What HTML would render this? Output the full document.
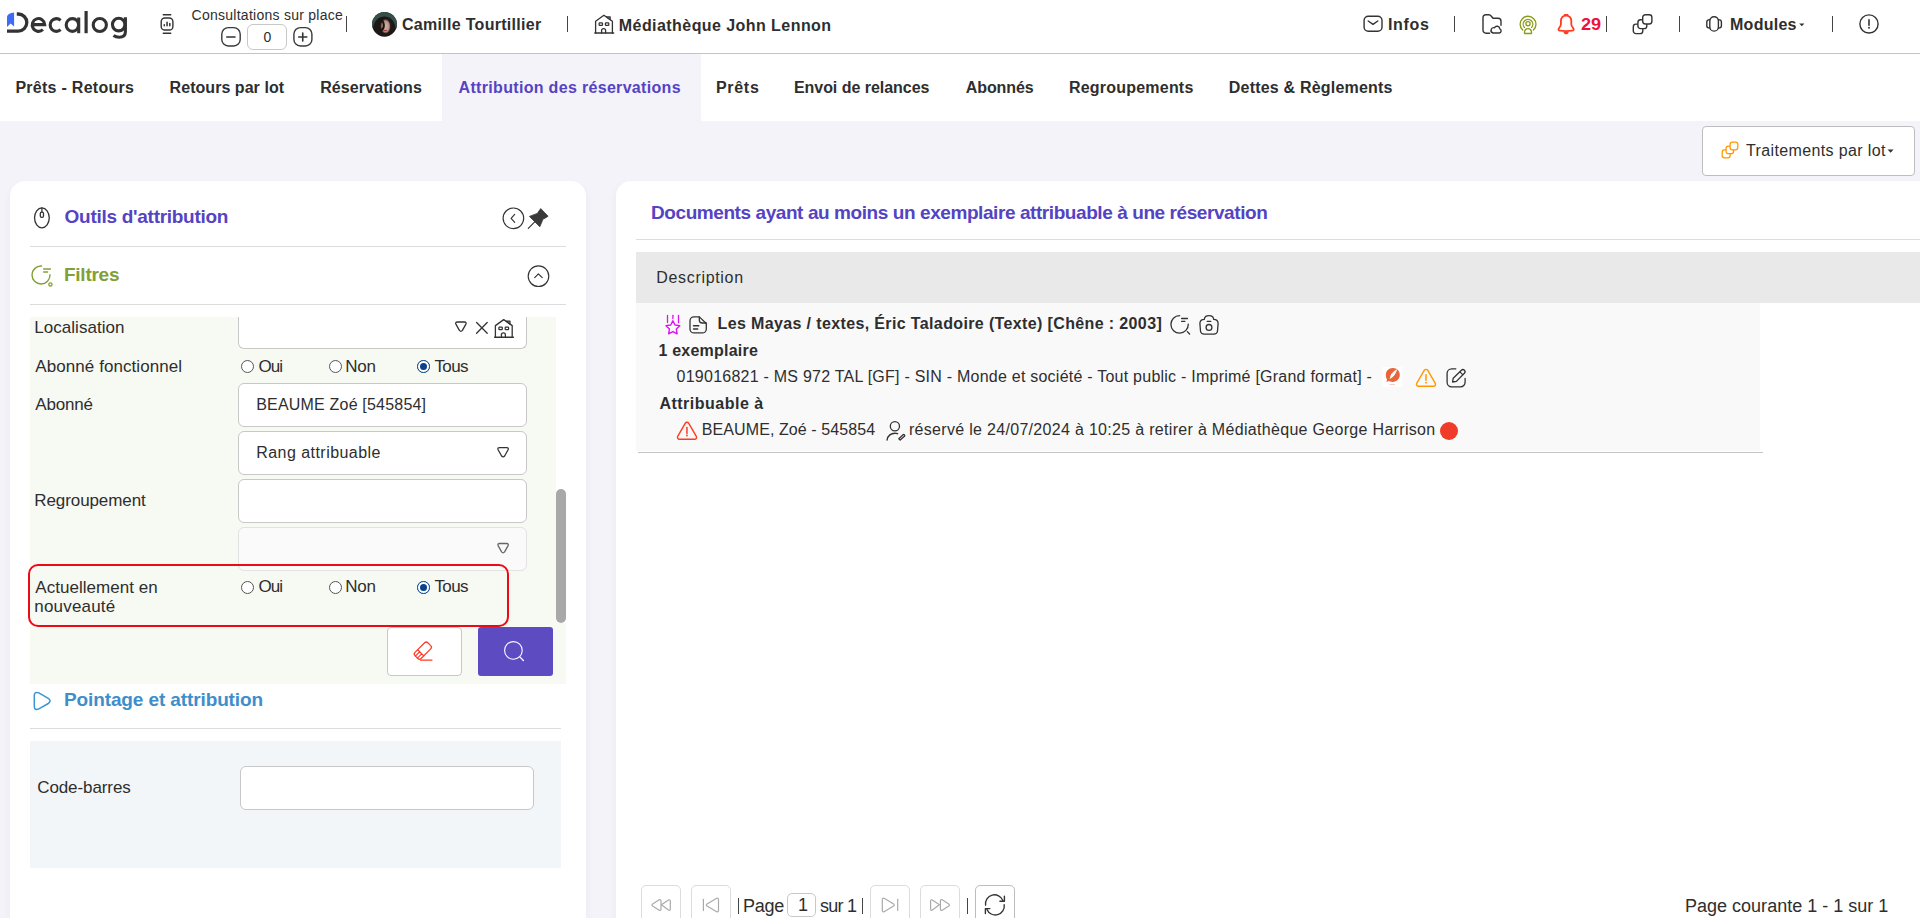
<!DOCTYPE html>
<html><head><meta charset="utf-8"><style>
html,body{margin:0;padding:0;}
body{width:1920px;height:918px;overflow:hidden;position:relative;background:#f4f3f9;font-family:"Liberation Sans", sans-serif;}
.t{position:absolute;white-space:nowrap;}
.b{position:absolute;box-sizing:border-box;}
</style></head><body>
<div class="b" style="left:0px;top:0px;width:1920px;height:53px;background:#fff"></div>
<div class="b" style="left:0px;top:53px;width:1920px;height:1px;background:#c4c4c4"></div>
<div class="b" style="left:0px;top:54px;width:1920px;height:67px;background:#fff"></div>
<div class="b" style="left:442px;top:54px;width:259px;height:67px;background:#f4f3f9"></div>
<svg class="b" style="left:0px;top:0px;" width="140" height="45" viewBox="0 0 140 45" fill="none"><path d="M7 17.5 C7 14.5 10 12.6 14.1 12.4 V26.6 L10.6 23.6 L7 27 Z" fill="#3f6cf5"/>
<path d="M16.8 14 H18.2 A8.6 8.6 0 0 1 18.2 31.2 H7" stroke="#333" stroke-width="3.3"/>
<path d="M32.2 24.6 H44.7 A6.25 6.4 0 1 0 42.9 29.5" stroke="#333" stroke-width="3.1"/>
<path d="M60.6 20.3 A6.2 6.4 0 1 0 60.6 29.7" stroke="#333" stroke-width="3.1"/>
<ellipse cx="72.4" cy="25" rx="6.2" ry="6.4" stroke="#333" stroke-width="3.1"/>
<path d="M78.7 17.5 V33.2" stroke="#333" stroke-width="3.1"/>
<path d="M86.1 11 V33.2" stroke="#333" stroke-width="3.2"/>
<ellipse cx="99.8" cy="25" rx="6.6" ry="6.5" stroke="#333" stroke-width="3.1"/>
<ellipse cx="118.7" cy="24.6" rx="6.25" ry="6.3" stroke="#333" stroke-width="3.1"/>
<path d="M125.4 17.3 V31.8 C125.4 35.9 122.8 37.3 119.2 37.3 C116.9 37.3 115 36.7 113.5 35.6" stroke="#333" stroke-width="3.1"/></svg>
<div class="t" style="left:191.60px;top:8.10px;font-size:14px;line-height:14px;font-weight:400;color:#2e2e2e;letter-spacing:0.257px;">Consultations sur place</div>
<div class="b" style="left:247px;top:24px;width:40px;height:26px;background:#fff;border:1px solid #c8c8c8;border-radius:6px"></div>
<div class="t" style="left:263.60px;top:30.15px;font-size:14px;line-height:14px;font-weight:400;color:#2e2e2e;letter-spacing:0.000px;">0</div>
<div class="t" style="left:402.00px;top:17.40px;font-size:16px;line-height:16px;font-weight:700;color:#2e2e2e;letter-spacing:0.293px;">Camille Tourtillier</div>
<div class="t" style="left:618.80px;top:18.00px;font-size:16px;line-height:16px;font-weight:700;color:#2e2e2e;letter-spacing:0.437px;">Médiathèque John Lennon</div>
<div class="t" style="left:1388.00px;top:17.20px;font-size:16px;line-height:16px;font-weight:700;color:#2e2e2e;letter-spacing:0.670px;">Infos</div>
<div class="t" style="left:1580.50px;top:17.20px;font-size:16px;line-height:16px;font-weight:700;color:#f0103c;letter-spacing:0.000px;transform:scaleX(1.1342);transform-origin:0.00px 0;">29</div>
<div class="t" style="left:1730.00px;top:17.20px;font-size:16px;line-height:16px;font-weight:700;color:#2e2e2e;letter-spacing:0.268px;">Modules</div>
<div class="b" style="left:346px;top:16px;width:1px;height:16px;background:#444"></div>
<div class="b" style="left:567px;top:16px;width:1px;height:16px;background:#444"></div>
<div class="b" style="left:1454px;top:16px;width:1px;height:16px;background:#444"></div>
<div class="b" style="left:1606px;top:16px;width:1px;height:16px;background:#444"></div>
<div class="b" style="left:1679px;top:16px;width:1px;height:16px;background:#444"></div>
<div class="b" style="left:1832px;top:16px;width:1px;height:16px;background:#444"></div>
<div class="t" style="left:15.40px;top:80.00px;font-size:16px;line-height:16px;font-weight:700;color:#2e2e2e;letter-spacing:0.272px;">Prêts - Retours</div>
<div class="t" style="left:169.60px;top:80.00px;font-size:16px;line-height:16px;font-weight:700;color:#2e2e2e;letter-spacing:0.046px;">Retours par lot</div>
<div class="t" style="left:320.20px;top:80.00px;font-size:16px;line-height:16px;font-weight:700;color:#2e2e2e;letter-spacing:0.101px;">Réservations</div>
<div class="t" style="left:458.60px;top:80.00px;font-size:16px;line-height:16px;font-weight:700;color:#5443c3;letter-spacing:0.319px;">Attribution des réservations</div>
<div class="t" style="left:715.90px;top:80.00px;font-size:16px;line-height:16px;font-weight:700;color:#2e2e2e;letter-spacing:0.719px;">Prêts</div>
<div class="t" style="left:793.90px;top:80.00px;font-size:16px;line-height:16px;font-weight:700;color:#2e2e2e;letter-spacing:-0.035px;">Envoi de relances</div>
<div class="t" style="left:965.80px;top:80.00px;font-size:16px;line-height:16px;font-weight:700;color:#2e2e2e;letter-spacing:-0.108px;">Abonnés</div>
<div class="t" style="left:1069.00px;top:80.00px;font-size:16px;line-height:16px;font-weight:700;color:#2e2e2e;letter-spacing:0.208px;">Regroupements</div>
<div class="t" style="left:1228.80px;top:80.00px;font-size:16px;line-height:16px;font-weight:700;color:#2e2e2e;letter-spacing:0.203px;">Dettes &amp; Règlements</div>
<div class="b" style="left:1702px;top:126px;width:213px;height:50px;background:#fff;border:1px solid #bdbdbd;border-radius:4px"></div>
<div class="t" style="left:1746.00px;top:142.70px;font-size:16px;line-height:16px;font-weight:400;color:#2e2e2e;letter-spacing:0.370px;">Traitements par lot</div>
<div class="b" style="left:10px;top:181px;width:576px;height:779px;background:#fff;border-radius:15px;box-shadow:0 4px 8px rgba(60,50,120,0.05)"></div>
<div class="t" style="left:64.60px;top:206.75px;font-size:19px;line-height:19px;font-weight:700;color:#5443c3;letter-spacing:-0.282px;">Outils d'attribution</div>
<div class="b" style="left:30px;top:246px;width:536px;height:1px;background:#ddd"></div>
<div class="t" style="left:64.00px;top:264.85px;font-size:19px;line-height:19px;font-weight:700;color:#82a034;letter-spacing:-0.259px;">Filtres</div>
<div class="b" style="left:30px;top:304px;width:536px;height:1px;background:#ddd"></div>
<div class="b" style="left:30px;top:317px;width:526px;height:306px;background:#f7f9f3"></div>
<div class="b" style="left:30px;top:623px;width:536px;height:61px;background:#f7f9f3"></div>
<div class="b" style="left:238px;top:317px;width:289px;height:32px;background:#fff;border:1px solid #c8c8c8;border-top:none;border-radius:0 0 6px 6px"></div>
<div class="b" style="left:238px;top:383px;width:289px;height:44px;background:#fff;border:1px solid #c8c8c8;border-radius:6px"></div>
<div class="b" style="left:238px;top:431px;width:289px;height:44px;background:#fff;border:1px solid #c8c8c8;border-radius:6px"></div>
<div class="b" style="left:238px;top:479px;width:289px;height:44px;background:#fff;border:1px solid #c8c8c8;border-radius:6px"></div>
<div class="b" style="left:238px;top:527px;width:289px;height:44px;background:#fafafa;border:1px solid #e2e2e2;border-radius:6px"></div>
<div class="t" style="left:34.30px;top:318.95px;font-size:17px;line-height:17px;font-weight:400;color:#2e2e2e;letter-spacing:0.034px;">Localisation</div>
<div class="t" style="left:35.30px;top:358.05px;font-size:17px;line-height:17px;font-weight:400;color:#2e2e2e;letter-spacing:0.071px;">Abonné fonctionnel</div>
<div class="t" style="left:35.30px;top:395.55px;font-size:17px;line-height:17px;font-weight:400;color:#2e2e2e;letter-spacing:-0.191px;">Abonné</div>
<div class="t" style="left:256.20px;top:396.70px;font-size:16px;line-height:16px;font-weight:400;color:#2e2e2e;letter-spacing:0.196px;">BEAUME Zoé [545854]</div>
<div class="t" style="left:256.20px;top:444.80px;font-size:16px;line-height:16px;font-weight:400;color:#2e2e2e;letter-spacing:0.459px;">Rang attribuable</div>
<div class="t" style="left:34.30px;top:492.45px;font-size:17px;line-height:17px;font-weight:400;color:#2e2e2e;letter-spacing:-0.094px;">Regroupement</div>
<div class="t" style="left:35.30px;top:578.95px;font-size:17px;line-height:17px;font-weight:400;color:#2e2e2e;letter-spacing:0.032px;">Actuellement en</div>
<div class="t" style="left:34.30px;top:597.75px;font-size:17px;line-height:17px;font-weight:400;color:#2e2e2e;letter-spacing:0.181px;">nouveauté</div>
<div class="b" style="left:240.7px;top:360.0px;width:13.0px;height:13.0px;border:1px solid #555;border-radius:50%;background:#fff"></div>
<div class="t" style="left:258.40px;top:357.55px;font-size:17px;line-height:17px;font-weight:400;color:#2e2e2e;letter-spacing:-0.939px;">Oui</div>
<div class="b" style="left:328.8px;top:360.0px;width:13.0px;height:13.0px;border:1px solid #555;border-radius:50%;background:#fff"></div>
<div class="t" style="left:345.25px;top:357.55px;font-size:17px;line-height:17px;font-weight:400;color:#2e2e2e;letter-spacing:-0.191px;">Non</div>
<div class="b" style="left:416.8px;top:360.0px;width:13.0px;height:13.0px;border:1px solid #555;border-radius:50%;background:#fff"></div>
<div class="b" style="left:416.8px;top:360.0px;width:13.0px;height:13.0px;border:1.6px solid #0d4d96;border-radius:50%;background:#fff"></div>
<div class="b" style="left:419.8px;top:363.0px;width:7.0px;height:7.0px;border-radius:50%;background:#0d3f8a"></div>
<div class="t" style="left:434.40px;top:357.55px;font-size:17px;line-height:17px;font-weight:400;color:#2e2e2e;letter-spacing:-0.570px;">Tous</div>
<div class="b" style="left:240.7px;top:581.0px;width:13.0px;height:13.0px;border:1px solid #555;border-radius:50%;background:#fff"></div>
<div class="t" style="left:258.40px;top:578.05px;font-size:17px;line-height:17px;font-weight:400;color:#2e2e2e;letter-spacing:-0.939px;">Oui</div>
<div class="b" style="left:328.8px;top:581.0px;width:13.0px;height:13.0px;border:1px solid #555;border-radius:50%;background:#fff"></div>
<div class="t" style="left:345.25px;top:578.05px;font-size:17px;line-height:17px;font-weight:400;color:#2e2e2e;letter-spacing:-0.191px;">Non</div>
<div class="b" style="left:416.8px;top:581.0px;width:13.0px;height:13.0px;border:1px solid #555;border-radius:50%;background:#fff"></div>
<div class="b" style="left:416.8px;top:581.0px;width:13.0px;height:13.0px;border:1.6px solid #0d4d96;border-radius:50%;background:#fff"></div>
<div class="b" style="left:419.8px;top:584.0px;width:7.0px;height:7.0px;border-radius:50%;background:#0d3f8a"></div>
<div class="t" style="left:434.40px;top:578.05px;font-size:17px;line-height:17px;font-weight:400;color:#2e2e2e;letter-spacing:-0.570px;">Tous</div>
<div class="b" style="left:27.5px;top:564.4px;width:481.0px;height:62.200000000000045px;border:2px solid #ee0a14;border-radius:10px"></div>
<div class="b" style="left:556px;top:489px;width:10px;height:134px;background:#a8a8a8;border-radius:5px"></div>
<div class="b" style="left:387px;top:627px;width:75px;height:49px;background:#fff;border:1px solid #c8c8c8;border-radius:4px"></div>
<div class="b" style="left:478px;top:627px;width:75px;height:49px;background:#5d4bc2;border-radius:3px"></div>
<div class="t" style="left:64.00px;top:689.75px;font-size:19px;line-height:19px;font-weight:700;color:#3d8ecb;letter-spacing:-0.114px;">Pointage et attribution</div>
<div class="b" style="left:30px;top:728px;width:531px;height:1px;background:#ddd"></div>
<div class="b" style="left:30px;top:741px;width:531px;height:127px;background:#f3f6f9"></div>
<div class="t" style="left:37.20px;top:778.95px;font-size:17px;line-height:17px;font-weight:400;color:#2e2e2e;letter-spacing:-0.089px;">Code-barres</div>
<div class="b" style="left:240px;top:766px;width:294px;height:44px;background:#fff;border:1px solid #c8c8c8;border-radius:6px"></div>
<div class="b" style="left:616px;top:181px;width:1344px;height:779px;background:#fff;border-radius:15px;box-shadow:0 4px 8px rgba(60,50,120,0.05)"></div>
<div class="t" style="left:651.00px;top:202.85px;font-size:19px;line-height:19px;font-weight:700;color:#5443c3;letter-spacing:-0.423px;">Documents ayant au moins un exemplaire attribuable à une réservation</div>
<div class="b" style="left:636px;top:239px;width:1284px;height:1px;background:#ddd"></div>
<div class="b" style="left:636px;top:252px;width:1284px;height:51px;background:#e9e9e9"></div>
<div class="t" style="left:656.20px;top:270.30px;font-size:16px;line-height:16px;font-weight:400;color:#2e2e2e;letter-spacing:0.687px;">Description</div>
<div class="b" style="left:636px;top:303px;width:1124px;height:148px;background:#f9f9f9"></div>
<div class="b" style="left:638px;top:452px;width:1125px;height:1px;background:#c4c4c4"></div>
<div class="t" style="left:717.50px;top:315.90px;font-size:16px;line-height:16px;font-weight:700;color:#2e2e2e;letter-spacing:0.369px;">Les Mayas / textes, Éric Taladoire (Texte) [Chêne : 2003]</div>
<div class="t" style="left:658.40px;top:343.20px;font-size:16px;line-height:16px;font-weight:700;color:#2e2e2e;letter-spacing:0.222px;">1 exemplaire</div>
<div class="t" style="left:676.60px;top:369.40px;font-size:16px;line-height:16px;font-weight:400;color:#2e2e2e;letter-spacing:0.237px;">019016821 - MS 972 TAL [GF] - SIN - Monde et société - Tout public - Imprimé [Grand format] -</div>
<div class="t" style="left:659.40px;top:396.10px;font-size:16px;line-height:16px;font-weight:700;color:#2e2e2e;letter-spacing:0.501px;">Attribuable à</div>
<div class="t" style="left:701.80px;top:422.40px;font-size:16px;line-height:16px;font-weight:400;color:#2e2e2e;letter-spacing:0.087px;">BEAUME, Zoé - 545854</div>
<div class="t" style="left:908.90px;top:422.40px;font-size:16px;line-height:16px;font-weight:400;color:#2e2e2e;letter-spacing:0.310px;">réservé le 24/07/2024 à 10:25 à retirer à Médiathèque George Harrison</div>
<div class="b" style="left:1440px;top:422px;width:18px;height:18px;background:#f03a2a;border-radius:50%"></div>
<div class="b" style="left:641px;top:885px;width:40px;height:45px;background:#fff;border:1px solid #dcdcdc;border-radius:5px"></div>
<div class="b" style="left:691px;top:885px;width:40px;height:45px;background:#fff;border:1px solid #dcdcdc;border-radius:5px"></div>
<div class="b" style="left:870px;top:885px;width:40px;height:45px;background:#fff;border:1px solid #dcdcdc;border-radius:5px"></div>
<div class="b" style="left:920px;top:885px;width:40px;height:45px;background:#fff;border:1px solid #dcdcdc;border-radius:5px"></div>
<div class="b" style="left:975px;top:885px;width:40px;height:45px;background:#fff;border:1px solid #bdbdbd;border-radius:5px"></div>
<div class="b" style="left:738px;top:898px;width:1px;height:16px;background:#444"></div>
<div class="b" style="left:862px;top:898px;width:1px;height:16px;background:#444"></div>
<div class="b" style="left:967px;top:898px;width:1px;height:16px;background:#444"></div>
<div class="t" style="left:743.10px;top:896.60px;font-size:18px;line-height:18px;font-weight:400;color:#2e2e2e;letter-spacing:-0.309px;">Page</div>
<div class="b" style="left:787px;top:893px;width:29px;height:24px;background:#fff;border:1px solid #c8c8c8;border-radius:5px"></div>
<div class="t" style="left:798.00px;top:895.90px;font-size:18px;line-height:18px;font-weight:400;color:#2e2e2e;letter-spacing:0.000px;">1</div>
<div class="t" style="left:820.00px;top:896.60px;font-size:18px;line-height:18px;font-weight:400;color:#2e2e2e;letter-spacing:-0.776px;">sur 1</div>
<div class="t" style="left:1685.00px;top:897.00px;font-size:18px;line-height:18px;font-weight:400;color:#2e2e2e;letter-spacing:0.008px;">Page courante 1 - 1 sur 1</div>
<svg class="b" style="left:0;top:0" width="1920" height="918" viewBox="0 0 1920 918" fill="none"><path d="M163.3 14.7 H170.7" stroke="#333" stroke-width="1.5" fill="none" stroke-linecap="round" stroke-linejoin="round" /><rect x="161.20" y="18.00" width="11.70" height="12.00" rx="3.6" stroke="#333" stroke-width="1.4" fill="none"/><path d="M164.3 24.8 V25.8 M167.05 22.3 V25.8 M169.8 23.5 V25.8" stroke="#333" stroke-width="1.5" fill="none" stroke-linecap="round" stroke-linejoin="round" /><path d="M163.3 33.2 H170.7" stroke="#333" stroke-width="1.5" fill="none" stroke-linecap="round" stroke-linejoin="round" /><rect x="221.80" y="27.60" width="18.40" height="18.40" rx="6.5" stroke="#3a3a3a" stroke-width="1.4" fill="none"/><path d="M226.8 37 H235" stroke="#333" stroke-width="1.6" fill="none" stroke-linecap="round" stroke-linejoin="round" /><rect x="293.90" y="27.60" width="18.00" height="18.40" rx="6.5" stroke="#3a3a3a" stroke-width="1.4" fill="none"/><path d="M298.7 37 H306.8 M302.75 33 V41" stroke="#333" stroke-width="1.6" fill="none" stroke-linecap="round" stroke-linejoin="round" /><defs><clipPath id="avc"><circle cx="384.5" cy="24.35" r="12.4"/></clipPath><radialGradient id="fc" cx="0.5" cy="0.5" r="0.5"><stop offset="0" stop-color="#d2b3a6"/><stop offset="0.7" stop-color="#b8968a"/><stop offset="1" stop-color="#3a2a25"/></radialGradient></defs><g clip-path="url(#avc)"><rect x="371" y="11" width="27" height="27" fill="#1d1715"/><path d="M370 26 C370 14 378 10.5 385 10.5 C392 10.5 399 14 399 25 L396 30 C395 22 392 17 385 16.5 C378 16.5 374 21 373 28 Z" fill="#34504b"/><ellipse cx="385.6" cy="26.3" rx="5" ry="7.3" fill="url(#fc)"/><path d="M378.5 19 C381 19 383.5 21 383.8 25 C384 28 382.5 30 380 31" stroke="#1d1412" stroke-width="2.2" fill="none"/><path d="M388 17.8 C389.5 20 391 22 391.3 26" stroke="#2a1d19" stroke-width="1.2" fill="none"/><path d="M383.2 30.4 Q385.2 29.6 387.4 30.4 Q385.2 31.6 383.2 30.4 Z" fill="#9d1f2e"/></g><g transform="translate(590 10)"><path d="M5.6 23 V11.3 L13.9 5.3 L22.4 11.3 V23" stroke="#333" stroke-width="1.3" fill="none" stroke-linecap="round" stroke-linejoin="round" /><path d="M4.9 23 H23.6" stroke="#333" stroke-width="1.5" fill="none" stroke-linecap="round" stroke-linejoin="round" /><path d="M16.4 6.9 H20.2 V9.9 Z" stroke="#333" stroke-width="1.2" fill="#999" stroke-linecap="round" stroke-linejoin="round" /><rect x="9.10" y="12.80" width="3.40" height="2.60" rx="0.7" stroke="#333" stroke-width="1.25" fill="none"/><rect x="15.40" y="12.80" width="3.40" height="2.60" rx="0.7" stroke="#333" stroke-width="1.25" fill="none"/><path d="M11.6 23 V20.6 A1.9 1.9 0 0 1 15.6 20.6 V23" stroke="#333" stroke-width="1.3" fill="none" stroke-linecap="round" stroke-linejoin="round" /></g><g transform="translate(489.8 314.3)"><path d="M5.6 23 V11.3 L13.9 5.3 L22.4 11.3 V23" stroke="#333" stroke-width="1.3" fill="none" stroke-linecap="round" stroke-linejoin="round" /><path d="M4.9 23 H23.6" stroke="#333" stroke-width="1.5" fill="none" stroke-linecap="round" stroke-linejoin="round" /><path d="M16.4 6.9 H20.2 V9.9 Z" stroke="#333" stroke-width="1.2" fill="#999" stroke-linecap="round" stroke-linejoin="round" /><rect x="9.10" y="12.80" width="3.40" height="2.60" rx="0.7" stroke="#333" stroke-width="1.25" fill="none"/><rect x="15.40" y="12.80" width="3.40" height="2.60" rx="0.7" stroke="#333" stroke-width="1.25" fill="none"/><path d="M11.6 23 V20.6 A1.9 1.9 0 0 1 15.6 20.6 V23" stroke="#333" stroke-width="1.3" fill="none" stroke-linecap="round" stroke-linejoin="round" /></g><rect x="1364.10" y="16.30" width="17.90" height="15.00" rx="4.2" stroke="#333" stroke-width="1.4" fill="none"/><path d="M1368.2 21 L1373 24.4 L1377.8 21" stroke="#333" stroke-width="1.4" fill="none" stroke-linecap="round" stroke-linejoin="round" /><path d="M1489.6 33.2 H1486 A3 3 0 0 1 1483 30.2 V17.5 A2.7 2.7 0 0 1 1485.7 14.8 H1489 C1490.5 14.8 1491 15.5 1492 17 L1492.8 18.2 H1498 A3 3 0 0 1 1501 21.2 V25.2" stroke="#333" stroke-width="1.4" fill="none" stroke-linecap="round" stroke-linejoin="round" /><path d="M1493 33 H1499.2 A2.2 2.2 0 0 0 1499.8 28.8 A2.8 2.8 0 0 0 1494.5 27.8 A2.2 2.2 0 0 0 1493 33 Z" stroke="#333" stroke-width="1.4" fill="none" stroke-linecap="round" stroke-linejoin="round" /><path d="M1522.7 30 A7.9 7.9 0 1 1 1533.4 30" stroke="#8c9a17" stroke-width="1.35" fill="none" stroke-linecap="round" stroke-linejoin="round" /><path d="M1524.4 27.4 A4.8 4.8 0 1 1 1531.6 27.4" stroke="#8c9a17" stroke-width="1.35" fill="none" stroke-linecap="round" stroke-linejoin="round" /><circle cx="1528" cy="23.8" r="2.1" stroke="#8c9a17" stroke-width="1.35" fill="none"/><path d="M1524.5 33.5 C1524.2 30 1526 28.6 1528 28.6 C1530 28.6 1531.8 30 1531.5 33.5 Z" stroke="#8c9a17" stroke-width="1.35" fill="none" stroke-linecap="round" stroke-linejoin="round" /><path d="M1566.1 15.6 C1562.6 15.6 1560.9 18.4 1560.9 21.6 V24.3 C1560.9 26.2 1559.9 27.2 1558.9 28.3 C1557.9 29.4 1558.6 30.5 1560.1 30.7 C1564 31.2 1568.2 31.2 1572.1 30.7 C1573.6 30.5 1574.3 29.4 1573.3 28.3 C1572.3 27.2 1571.3 26.2 1571.3 24.3 V21.6 C1571.3 18.4 1569.6 15.6 1566.1 15.6 Z" stroke="#ff3b20" stroke-width="1.8" fill="none" stroke-linecap="round" stroke-linejoin="round" /><path d="M1564.6 14.9 H1567.6" stroke="#ff3b20" stroke-width="1.8" fill="none" stroke-linecap="round" stroke-linejoin="round" /><path d="M1563.4 31.4 H1568.8 C1568.6 33.2 1567.6 34.3 1566.1 34.3 C1564.6 34.3 1563.6 33.2 1563.4 31.4 Z" fill="#ff3b20"/><g transform="translate(1632.6 14.0)"><g transform="scale(1.0)"><rect x="0.70" y="10.10" width="9.50" height="9.50" rx="2.7" stroke="#333" stroke-width="1.4" fill="#fff"/><rect x="5.30" y="5.70" width="8.90" height="8.90" rx="2.7" stroke="#333" stroke-width="1.4" fill="#fff"/><rect x="10.10" y="0.80" width="9.20" height="9.20" rx="2.7" stroke="#333" stroke-width="1.4" fill="#fff"/></g></g><rect x="1709.80" y="16.80" width="8.60" height="14.30" rx="4.2" stroke="#333" stroke-width="1.4" fill="none"/><path d="M1709.8 19.6 C1707.8 19.6 1706.8 20.3 1706.8 21.8 V26 C1706.8 27.5 1707.8 28.1 1709.8 28.1" stroke="#333" stroke-width="1.4" fill="none" stroke-linecap="round" stroke-linejoin="round" /><path d="M1718.4 19.6 C1720.4 19.6 1721.4 20.3 1721.4 21.8 V26 C1721.4 27.5 1720.4 28.1 1718.4 28.1" stroke="#333" stroke-width="1.4" fill="none" stroke-linecap="round" stroke-linejoin="round" /><path d="M1799.2 23.6 H1804.4 L1801.8 26.2 Z" fill="#333"/><circle cx="1869" cy="23.95" r="9.1" stroke="#333" stroke-width="1.4" fill="none"/><path d="M1869 19.9 V25.2" stroke="#333" stroke-width="1.6" fill="none" stroke-linecap="round" stroke-linejoin="round" /><path d="M1869 27.6 V27.7" stroke="#333" stroke-width="1.9" fill="none" stroke-linecap="round" stroke-linejoin="round" /><g transform="translate(1721.6 141.4)"><g transform="scale(0.84)"><rect x="0.70" y="10.10" width="9.50" height="9.50" rx="2.7" stroke="#ff9800" stroke-width="1.5" fill="#fff"/><rect x="5.30" y="5.70" width="8.90" height="8.90" rx="2.7" stroke="#ff9800" stroke-width="1.5" fill="#fff"/><rect x="10.10" y="0.80" width="9.20" height="9.20" rx="2.7" stroke="#ff9800" stroke-width="1.5" fill="#fff"/></g></g><path d="M1887.6 149.6 H1893.6 L1890.6 152.8 Z" fill="#333"/><ellipse cx="41.9" cy="217.85" rx="7.35" ry="10" stroke="#333" stroke-width="1.3"/><rect x="40.30" y="212.20" width="3.20" height="5.10" rx="1.3" stroke="#333" stroke-width="1.3" fill="none"/><path d="M41.9 208 V212" stroke="#333" stroke-width="1.3" fill="none" stroke-linecap="round" stroke-linejoin="round" /><circle cx="513.4" cy="218.3" r="10.3" stroke="#333" stroke-width="1.15" fill="none"/><path d="M514.7 214.4 L511.1 218.4 L514.7 222.4" stroke="#333" stroke-width="1.15" fill="none" stroke-linecap="round" stroke-linejoin="round" stroke-linecap="butt"/><path d="M540.7 208.6 L548.1 216.2 C546.5 217.5 544.5 218.4 542.9 219.3 C541.9 221.8 541 224.3 539.8 226.8 L529.4 216.4 C532 215.3 534.6 214.4 537.3 213.4 C538.4 211.8 539.6 210.2 540.7 208.6 Z" fill="#3a3a3a" stroke="#3a3a3a" stroke-width="0.8" stroke-linejoin="round"/><path d="M535.2 221.4 L528.3 228.4" stroke="#3a3a3a" stroke-width="1.2" fill="none" stroke-linecap="round" stroke-linejoin="round" /><path d="M41.5 266 A9 9 0 1 0 50 274.6" stroke="#82a034" stroke-width="1.4" fill="none" stroke-linecap="round" stroke-linejoin="round" /><path d="M43.7 269 H50.4 M43.7 272 H47.6" stroke="#82a034" stroke-width="1.4" fill="none" stroke-linecap="round" stroke-linejoin="round" /><circle cx="50.4" cy="284.4" r="1.6" stroke="#82a034" stroke-width="1.3" fill="none"/><circle cx="538.5" cy="276.2" r="10.3" stroke="#333" stroke-width="1.15" fill="none"/><path d="M534.7 277.6 L538.4 273.8 L542.2 277.6" stroke="#333" stroke-width="1.15" fill="none" stroke-linecap="round" stroke-linejoin="round" stroke-linecap="butt"/><path d="M457.4 322.0 H464.4 Q466.79999999999995 322.0 465.9 324.1 L462.4 330.4 Q460.9 332.2 459.4 330.4 L455.9 324.1 Q455.0 322.0 457.4 322.0 Z" stroke="#333" stroke-width="1.3" fill="none" stroke-linecap="round" stroke-linejoin="round" /><path d="M499.6 447.6 H506.6 Q509.0 447.6 508.1 449.70000000000005 L504.6 456.0 Q503.1 457.8 501.6 456.0 L498.1 449.70000000000005 Q497.20000000000005 447.6 499.6 447.6 Z" stroke="#333" stroke-width="1.3" fill="none" stroke-linecap="round" stroke-linejoin="round" /><path d="M499.6 543.5 H506.6 Q509.0 543.5 508.1 545.6 L504.6 551.9 Q503.1 553.7 501.6 551.9 L498.1 545.6 Q497.20000000000005 543.5 499.6 543.5 Z" stroke="#666" stroke-width="1.3" fill="none" stroke-linecap="round" stroke-linejoin="round" /><path d="M476.6 322.5 L487.2 333.2 M487.2 322.5 L476.6 333.2" stroke="#333" stroke-width="1.3" fill="none" stroke-linecap="round" stroke-linejoin="round" /><g transform="translate(422.85 650.65) rotate(-45)"><rect x="-9.10" y="-4.30" width="18.20" height="8.60" rx="2.3" stroke="#ff3b26" stroke-width="1.25" fill="none"/><path d="M-3.0 -4.3 V4.3 M-9.1 -1.45 H-3.0 M-9.1 1.45 H-3.0" stroke="#ff3b26" stroke-width="1.15" fill="none" stroke-linecap="round" stroke-linejoin="round" /></g><path d="M420.5 660.2 H431.9" stroke="#ff3b26" stroke-width="1.25" fill="none" stroke-linecap="round" stroke-linejoin="round" /><circle cx="513.4" cy="650.4" r="8.8" stroke="#fff" stroke-width="1.1" fill="none"/><path d="M519.8 656.9 L523.4 660.5" stroke="#fff" stroke-width="1.3" fill="none" stroke-linecap="round" stroke-linejoin="round" /><path d="M34.3 695.5 C34.3 692.5 36.5 691.8 38.8 692.9 L48.3 698.3 C50.7 699.7 50.7 702 48.3 703.5 L38.8 708.9 C36.5 710.1 34.3 709.4 34.3 706.4 Z" stroke="#3a95d0" stroke-width="1.5" fill="none" stroke-linecap="round" stroke-linejoin="round" /><g transform="translate(664.6 319.3) scale(0.69)"><path d="M12 17.75l-6.172 3.245l1.179 -6.873l-5 -4.867l6.9 -1l3.086 -6.253l3.086 6.253l6.9 1l-5 4.867l1.179 6.873z" stroke="#dd12f2" stroke-width="2.0" fill="none" stroke-linecap="round" stroke-linejoin="round" /></g><path d="M667.5 315.3 V322.5 M678.5 315.3 V322.5" stroke="#dd12f2" stroke-width="1.3" fill="none" stroke-linecap="round" stroke-linejoin="round" /><path d="M672.9 315.3 V318.6" stroke="#dd12f2" stroke-width="1.3" fill="none" stroke-linecap="round" stroke-linejoin="round" /><path d="M699.3 316.9 H694 A4 4 0 0 0 690 320.9 V328.9 A4 4 0 0 0 694 332.9 H702.3 A4 4 0 0 0 706.3 328.9 V323.5 Z" stroke="#333" stroke-width="1.3" fill="none" stroke-linecap="round" stroke-linejoin="round" /><path d="M699.3 317 V320 A3 3 0 0 0 702.3 323 H706.2" stroke="#333" stroke-width="1.3" fill="none" stroke-linecap="round" stroke-linejoin="round" /><path d="M693.5 325.7 H698.8 M693.5 329 H697.7" stroke="#333" stroke-width="1.4" fill="none" stroke-linecap="round" stroke-linejoin="round" /><path d="M1179.6 315.7 A8.7 8.7 0 1 0 1188.3 324.1" stroke="#333" stroke-width="1.3" fill="none" stroke-linecap="round" stroke-linejoin="round" /><path d="M1181.6 318.5 H1187.5 M1181.6 321.3 H1184.9" stroke="#333" stroke-width="1.3" fill="none" stroke-linecap="round" stroke-linejoin="round" /><path d="M1187.3 331.6 L1189.6 334" stroke="#333" stroke-width="1.3" fill="none" stroke-linecap="round" stroke-linejoin="round" /><path d="M1204.3 319.4 C1204.5 317 1206.4 315.7 1209 315.7 C1211.6 315.7 1213.5 317 1213.7 319.4 C1216.5 319.5 1218.1 320.6 1218.1 323.6 L1217.5 331 C1217.3 333.2 1216.1 334.1 1213.5 334.1 H1204.5 C1201.9 334.1 1200.7 333.2 1200.5 331 L1199.9 323.6 C1199.9 320.6 1201.5 319.5 1204.3 319.4 Z" stroke="#333" stroke-width="1.3" fill="none" stroke-linecap="round" stroke-linejoin="round" /><circle cx="1209" cy="327.4" r="2.9" stroke="#333" stroke-width="1.3" fill="none"/><path d="M1207.2 321.3 H1210.8" stroke="#333" stroke-width="1.3" fill="none" stroke-linecap="round" stroke-linejoin="round" /><rect x="1382.2" y="366.9" width="19.8" height="19.9" fill="#fff"/><path d="M1392.8 368.1 C1397 368.1 1399.8 371 1399.8 374.8 C1399.8 378.8 1396.8 381.9 1392.6 381.9 C1391 381.9 1389.8 381.6 1388.8 381.1 L1386.5 382 L1387 379.6 C1386.2 378.3 1385.8 376.8 1385.8 375.2 C1385.8 371.2 1388.6 368.1 1392.8 368.1 Z" fill="#e9643a"/><path d="M1389.6 379.2 Q1390.2 372.8 1397.2 368.9 Q1395.8 375.6 1389.6 379.2 Z" fill="#fff"/><rect x="1389.5" y="384" width="5.5" height="0.8" fill="#f0c4b4"/><path d="M1424.2 370.4 C1425 369 1427 369 1427.8 370.4 L1435.3 383.3 C1436 384.7 1435.1 386.3 1433.5 386.3 H1418.5 C1416.9 386.3 1416 384.7 1416.7 383.3 Z" stroke="#ff9800" stroke-width="1.4" fill="none" stroke-linecap="round" stroke-linejoin="round" /><path d="M1426 374.8 V380.3" stroke="#ff9800" stroke-width="1.5" fill="none" stroke-linecap="round" stroke-linejoin="round" /><path d="M1426 382.6 V382.7" stroke="#ff9800" stroke-width="1.8" fill="none" stroke-linecap="round" stroke-linejoin="round" /><path d="M1455.8 368.8 H1451.6 A4.5 4.5 0 0 0 1447.1 373.3 V382.3 A4.5 4.5 0 0 0 1451.6 386.8 H1460.6 A4.5 4.5 0 0 0 1465.1 382.3 V378.5" stroke="#333" stroke-width="1.3" fill="none" stroke-linecap="round" stroke-linejoin="round" /><path d="M1461.4 370.2 A1.9 1.9 0 0 1 1464.4 373.2 L1456.4 381.4 L1452.6 382 L1453.2 378.2 Z" stroke="#333" stroke-width="1.3" fill="none" stroke-linecap="round" stroke-linejoin="round" /><path d="M1460 371.9 L1462.7 374.6" stroke="#333" stroke-width="1.2" fill="none" stroke-linecap="round" stroke-linejoin="round" /><path d="M685.2 423.3 C686 421.9 688 421.9 688.8 423.3 L696.3 436.3 C697 437.7 696.1 439.3 694.5 439.3 H679.5 C677.9 439.3 677 437.7 677.7 436.3 Z" stroke="#ff3b20" stroke-width="1.4" fill="none" stroke-linecap="round" stroke-linejoin="round" /><path d="M686.95 427.6 V433.4" stroke="#ff3b20" stroke-width="1.5" fill="none" stroke-linecap="round" stroke-linejoin="round" /><path d="M686.95 435.5 V435.6" stroke="#ff3b20" stroke-width="1.8" fill="none" stroke-linecap="round" stroke-linejoin="round" /><circle cx="894.9" cy="426.3" r="4.6" stroke="#333" stroke-width="1.3" fill="none"/><path d="M887.1 440 C887.6 435.8 891.2 432.9 895.5 433.2 C896.3 433.2 897 433.4 897.6 433.7" stroke="#333" stroke-width="1.4" fill="none" stroke-linecap="round" stroke-linejoin="round" /><path d="M898.8 438.7 L903.3 434.6 A1.1 1.1 0 0 1 904.7 436 L900.2 440.1 Z" stroke="#333" stroke-width="1.3" fill="none" stroke-linecap="round" stroke-linejoin="round" /><path d="M652.6 903.9 L659.2 899.8 C660.2 899.2 661 899.8 661 900.9 V909.1 C661 910.2 660.2 910.8 659.2 910.2 L652.6 906.1 C651.8 905.6 651.8 904.4 652.6 903.9 Z" stroke="#aaa" stroke-width="1.2" fill="none" stroke-linecap="round" stroke-linejoin="round" /><path d="M661.4 904.8 L668.5 900 C669.5 899.4 670.3 900 670.3 901.1 V909 C670.3 910.1 669.5 910.7 668.5 910.1 Z" stroke="#aaa" stroke-width="1.2" fill="none" stroke-linecap="round" stroke-linejoin="round" /><path d="M703.4 899.3 V910.5" stroke="#aaa" stroke-width="1.2" fill="none" stroke-linecap="round" stroke-linejoin="round" /><path d="M707 903.9 L716.2 898.4 C717.4 897.7 718.5 898.4 718.5 899.7 V910.3 C718.5 911.6 717.4 912.3 716.2 911.6 L707 906.1 C706.2 905.6 706.2 904.4 707 903.9 Z" stroke="#aaa" stroke-width="1.2" fill="none" stroke-linecap="round" stroke-linejoin="round" /><path d="M893.6 903.9 L884.6 898.4 C883.4 897.7 882.3 898.4 882.3 899.7 V910.3 C882.3 911.6 883.4 912.3 884.6 911.6 L893.6 906.1 C894.4 905.6 894.4 904.4 893.6 903.9 Z" stroke="#aaa" stroke-width="1.2" fill="none" stroke-linecap="round" stroke-linejoin="round" /><path d="M897.7 899.3 V910.5" stroke="#aaa" stroke-width="1.2" fill="none" stroke-linecap="round" stroke-linejoin="round" /><path d="M939.4 904.8 L932.3 900 C931.3 899.4 930.6 900 930.6 901.1 V909 C930.6 910.1 931.3 910.7 932.3 910.1 Z" stroke="#aaa" stroke-width="1.2" fill="none" stroke-linecap="round" stroke-linejoin="round" /><path d="M948.8 903.9 L942.2 899.8 C941.2 899.2 940.4 899.8 940.4 900.9 V909.1 C940.4 910.2 941.2 910.8 942.2 910.2 L948.8 906.1 C949.6 905.6 949.6 904.4 948.8 903.9 Z" stroke="#aaa" stroke-width="1.2" fill="none" stroke-linecap="round" stroke-linejoin="round" /><path d="M985.6 905.2 A9 9 0 0 1 1002.9 900.6" stroke="#333" stroke-width="1.35" fill="none" stroke-linecap="round" stroke-linejoin="round" /><path d="M1004.4 896.2 V901.2 H999.9" stroke="#333" stroke-width="1.4" fill="none" stroke-linecap="round" stroke-linejoin="round" /><path d="M1004.2 904.6 A9 9 0 0 1 986.9 909.2" stroke="#333" stroke-width="1.35" fill="none" stroke-linecap="round" stroke-linejoin="round" /><path d="M985.4 913.6 V908.6 H989.9" stroke="#333" stroke-width="1.4" fill="none" stroke-linecap="round" stroke-linejoin="round" /></svg>
</body></html>
